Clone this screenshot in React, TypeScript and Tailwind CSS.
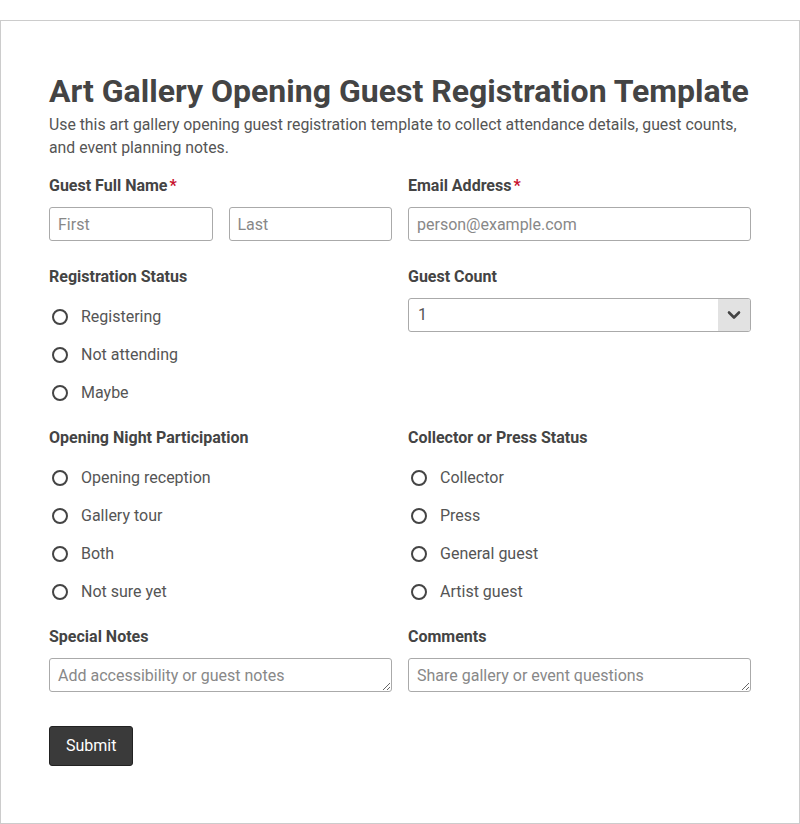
import React from "react";

const font = { fontFamily: "Roboto, 'Liberation Sans', sans-serif" };

function Label({ children, required }: { children: React.ReactNode; required?: boolean }) {
  return (
    <div className="text-[16px] leading-[22px] font-bold text-[#444]">
      {children}
      {required && <span className="ml-[2px] text-[#c8102e]">*</span>}
    </div>
  );
}

function Radio({ label }: { label: string }) {
  return (
    <label className="flex h-[22px] items-center gap-[13px] text-[16px] text-[#555]">
      <span className="ml-[3px] h-[16px] w-[16px] rounded-full border-2 border-[#444]" />
      {label}
    </label>
  );
}

function RadioGroup({ label, options }: { label: string; options: string[] }) {
  return (
    <div>
      <Label>{label}</Label>
      <div className="mt-[18px] flex flex-col gap-[16px]">
        {options.map((o) => (
          <Radio key={o} label={o} />
        ))}
      </div>
    </div>
  );
}

const inputCls =
  "h-[34px] w-full rounded-[3px] border border-[#aaa] bg-white px-[8px] text-[16px] text-[#555] placeholder:text-[#888] outline-none";

export default function App() {
  return (
    <div className="bg-white pt-[20px]" style={font}>
      <div className="h-[804px] border border-[#ccc] px-[48px] pt-[51px]">
        <h1 className="text-[32px] leading-[38px] font-bold text-[#444]">
          Art Gallery Opening Guest Registration Template
        </h1>
        <p className="mt-[3px] text-[15.8px] leading-[23px] text-[#555]">
          Use this art gallery opening guest registration template to collect attendance details, guest counts,
          and event planning notes.
        </p>

        <div className="mt-[16px] grid grid-cols-2 gap-x-[16px]">
          <div>
            <Label required>Guest Full Name</Label>
            <div className="mt-[10px] flex gap-[16px]">
              <input className={inputCls} placeholder="First" />
              <input className={inputCls} placeholder="Last" />
            </div>
          </div>
          <div>
            <Label required>Email Address</Label>
            <input className={inputCls + " mt-[10px]"} placeholder="person@example.com" />
          </div>
        </div>

        <div className="mt-[25px] grid grid-cols-2 gap-x-[16px]">
          <RadioGroup label="Registration Status" options={["Registering", "Not attending", "Maybe"]} />
          <div>
            <Label>Guest Count</Label>
            <div className="mt-[10px] flex h-[34px] overflow-hidden rounded-[3px] border border-[#aaa]">
              <div className="flex flex-1 items-center px-[9px] text-[16px] text-[#555]">1</div>
              <div className="flex w-[32px] items-center justify-center bg-[#e2e2e2]">
                <svg width="14" height="10" viewBox="0 0 14 10" fill="none">
                  <path d="M2 2.5 L7 7.5 L12 2.5" stroke="#444" strokeWidth="2.6" strokeLinecap="round" strokeLinejoin="round" />
                </svg>
              </div>
            </div>
          </div>
        </div>

        <div className="mt-[23px] grid grid-cols-2 gap-x-[16px]">
          <RadioGroup
            label="Opening Night Participation"
            options={["Opening reception", "Gallery tour", "Both", "Not sure yet"]}
          />
          <RadioGroup
            label="Collector or Press Status"
            options={["Collector", "Press", "General guest", "Artist guest"]}
          />
        </div>

        <div className="mt-[23px] grid grid-cols-2 gap-x-[16px]">
          <div>
            <Label>Special Notes</Label>
            <textarea
              rows={1}
              className={inputCls + " mt-[10px] block resize-y pt-[6px] pb-[4px] leading-[22px]"}
              placeholder="Add accessibility or guest notes"
            />
          </div>
          <div>
            <Label>Comments</Label>
            <textarea
              rows={1}
              className={inputCls + " mt-[10px] block resize-y pt-[6px] pb-[4px] leading-[22px]"}
              placeholder="Share gallery or event questions"
            />
          </div>
        </div>

        <button className="mt-[34px] h-[40px] rounded-[3px] border border-[#222] bg-[#3a3a3a] px-[16px] text-[16px] text-white">
          Submit
        </button>
      </div>
    </div>
  );
}
